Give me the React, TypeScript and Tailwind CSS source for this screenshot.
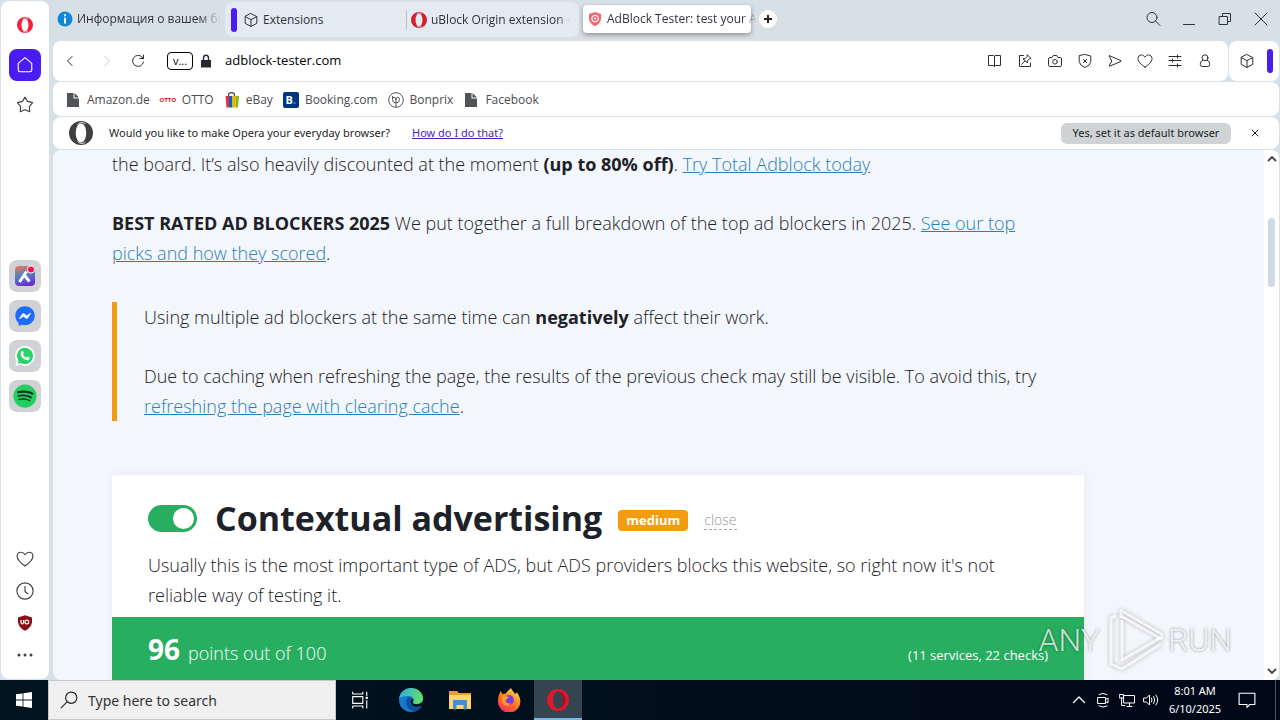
import React from "react";
import { FaFacebookMessenger, FaSpotify } from "react-icons/fa";

type IconProps = {
  children: React.ReactNode;
  className?: string;
  box?: string;
};

// line icon on a 16px grid
function Icon({ children, className = "size-4", box = "0 0 16 16" }: IconProps) {
  return (
    <svg
      viewBox={box}
      className={`shrink-0 ${className}`}
      fill="none"
      stroke="currentColor"
      strokeWidth="1"
      strokeLinecap="round"
      strokeLinejoin="round"
      aria-hidden="true"
    >
      {children}
    </svg>
  );
}

const cube = (
  <>
    <path d="M8 1.6 13.8 4.6V11.4L8 14.4 2.2 11.4V4.6Z" />
    <path d="M2.2 4.6 8 7.6 13.8 4.6M8 7.6V14.4" />
  </>
);

const heart = (
  <path d="M8 14.200C4 11.500 1 8.800 1 5.600 1 3.400 2.500 2 4.400 2 6 2 7.300 3 8 4.200 8.700 3 10 2 11.600 2 13.500 2 15 3.400 15 5.600 15 8.800 12 11.500 8 14.200Z" />
);

function OperaLogo({ className, color }: { className: string; color: string }) {
  return (
    <svg viewBox="0 0 24 24" className={`shrink-0 ${className}`} aria-hidden="true">
      <path
        fill={color}
        fillRule="evenodd"
        d="M12 0a12 12 0 1 0 0 24a12 12 0 1 0 0-24ZM12 2.600c3 0 5.200 4 5.200 9.400s-2.200 9.400-5.200 9.400s-5.200-4-5.200-9.400s2.200-9.400 5.200-9.400Z"
      />
      <path stroke="#fff" strokeWidth=".9" fill="none" d="M8.500 3.700C11 .8 14 .9 16.500 3M8.500 20.300C11 23.200 14 23.100 16.500 21" />
    </svg>
  );
}

const toolbarIcons = [
  {
    label: "Reader mode",
    icon: <path d="M7.500 3.500V13.500M7.500 3.500 6.500 2.500H1.500V12.500H6.500L7.500 13.500 8.500 12.500H13.500V2.500H8.500Z" />,
  },
  {
    label: "Easy setup",
    icon: (
      <>
        <path d="M6.500 2.500H2.500V13.500H13.500V10" />
        <path d="m10.500 2 3.500 3.500-1.500.3-2.200 2.200.1 2-4.400-4.400 2 .1 2.200-2.200ZM8 8l-3.300 3.300" />
      </>
    ),
  },
  {
    label: "Snapshot",
    icon: (
      <>
        <path d="M1.500 5.900q0-1.400 1.400-1.400H5L6.300 2.500H9.700L11 4.500h2.100q1.400 0 1.400 1.400v6.200q0 1.400-1.400 1.400H2.900q-1.400 0-1.400-1.400Z" />
        <circle cx="8" cy="8.800" r="2.300" />
      </>
    ),
  },
  {
    label: "Ad blocker",
    icon: (
      <>
        <path d="M8 1.500 13.800 3V8.500Q13.400 12.500 8 14.500 2.600 12.500 2.200 8.500V3Z" />
        <path d="m6.300 6.300 3.400 3.400M9.700 6.300 6.300 9.700" />
      </>
    ),
  },
  {
    label: "Flow",
    icon: <path d="M2.600 2.800 14 7.600q.5.400 0 .8L2.600 13.200q-.7.200-.4-.6L4.800 8 2.200 3.400q-.3-.800.4-.6Z" />,
  },
  { label: "Pinboards", icon: heart },
  {
    label: "Tab settings",
    icon: <path d="M2 3.500H14M2 7.500H14M2 12.500H14M10.500 2V5M5.500 6V9M10.500 11V14" />,
  },
  {
    label: "Profile",
    icon: (
      <>
        <circle cx="8" cy="4.800" r="3" />
        <path d="M5.700 7.200C3.800 8 3.300 9.800 3.300 11.500q0 2 2 2h5.400q2 0 2-2C12.700 9.800 12.200 8 10.300 7.200" />
      </>
    ),
  },
];

function PageIcon() {
  return (
    <svg viewBox="0 0 16 16" className="size-4" aria-hidden="true">
      <path fill="#505357" d="M2 1H8.500V6.500H14V15H2ZM9.500 1 14 5.500H9.500Z" />
    </svg>
  );
}

const bookmarks = [
  { name: "Amazon.de", icon: <PageIcon /> },
  {
    name: "OTTO",
    icon: (
      <span className="flex h-4 w-4 items-center justify-center font-['Liberation_Sans'] text-[6px] font-bold text-[#e2001a]">
        OTTO
      </span>
    ),
  },
  {
    name: "eBay",
    icon: (
      <svg viewBox="0 0 16 16" className="size-4" aria-hidden="true">
        <path d="M4.500 5V3Q4.500.7 7.500.7T10.500 3V5" fill="none" stroke="#444" strokeWidth="1.200" />
        <path fill="#e53238" d="M1.500 4H5V15.500H2.500Z" />
        <path fill="#0064d2" d="M5 4H8.500V15.500H5Z" />
        <path fill="#f5af02" d="M8 4H11.500V15.500H8Z" />
        <path fill="#86b817" d="M11.500 4H15L14 15.500H11.500Z" />
      </svg>
    ),
  },
  {
    name: "Booking.com",
    icon: (
      <span className="flex size-4 items-center justify-center rounded-xs bg-[#003580] text-[11px] font-bold text-white">
        B<span className="text-[#19b5fe]">.</span>
      </span>
    ),
  },
  {
    name: "Bonprix",
    icon: (
      <svg viewBox="0 0 16 16" className="size-4" fill="none" stroke="#555" aria-hidden="true">
        <circle cx="8" cy="8" r="7.300" />
        <path d="M8 15V8M4.500 4V7.500Q4.500 11 8 11 11.500 11 11.500 7.500 11.500 5.200 9.700 5.200 8 5.200 8 8M4.500 5.200Q8 4.800 8 8" />
      </svg>
    ),
  },
  { name: "Facebook", icon: <PageIcon /> },
];

function TabStrip() {
  return (
    <div className="flex h-[41px] items-start text-[12px] text-[#30343a]">
      <button className="flex h-[38px] w-[172px] items-center gap-1 pr-2 pl-1">
        <svg viewBox="0 0 16 16" className="size-4 shrink-0" aria-hidden="true">
          <circle cx="8" cy="8" r="7.500" fill="#1287d8" />
          <path stroke="#fff" strokeWidth="2" d="M8 3.200V5.200M8 6.700V12.500" />
        </svg>
        <span className="flex-1 text-left whitespace-nowrap [mask-image:linear-gradient(90deg,#000_82%,transparent_97%)]">
          Информация о вашем бр
        </span>
      </button>
      <div className="mt-0.5 flex h-[35px] w-[354px] items-center rounded-lg bg-[#e4eaf1] pl-1.5">
        <div className="h-6 w-1.5 rounded-full bg-[#4a1cf2]" />
        <button className="flex w-[169px] items-center gap-1 pl-1.5">
          <Icon>{cube}</Icon>
          <span>Extensions</span>
        </button>
        <div className="h-5 w-px bg-[#b9c1ca]" />
        <button className="flex w-[164px] items-center gap-1 pl-1">
          <OperaLogo className="size-4" color="#d3202c" />
          <span className="flex-1 text-left whitespace-nowrap [mask-image:linear-gradient(90deg,#000_90%,transparent)]">
            uBlock Origin extension -
          </span>
        </button>
      </div>
      <button className="mt-[5px] ml-1 flex h-7 w-[168px] items-center gap-1 rounded bg-white px-1 shadow-[0_2px_5px_#0005]">
        <svg viewBox="0 0 16 16" className="size-4 shrink-0" aria-hidden="true">
          <path fill="#f4646e" d="M8 1 14 3V8Q13.500 12.500 8 15.200 2.500 12.500 2 8V3Z" />
          <circle cx="8" cy="7.600" r="3.200" fill="none" stroke="#fff" strokeWidth="1.200" />
          <circle cx="8" cy="7.600" r="1" fill="#fff" />
        </svg>
        <span className="flex-1 text-left whitespace-nowrap [mask-image:linear-gradient(90deg,#000_90%,transparent)]">
          AdBlock Tester: test your A
        </span>
      </button>
      <button aria-label="New tab" className="mt-2.5 ml-2 flex size-[18px] items-center justify-center rounded-full bg-white">
        <svg viewBox="0 0 8 8" className="size-2" aria-hidden="true">
          <path stroke="#222" strokeWidth="2" d="M4 0V8M0 4H8" />
        </svg>
      </button>
      <div className="mt-[11px] ml-auto flex items-center gap-5 pr-2.5">
        <button aria-label="Search tabs">
          <Icon>
            <circle cx="7" cy="6.500" r="5" />
            <path d="m10.700 10.200 4.300 4.300" />
          </Icon>
        </button>
        <button aria-label="Minimize">
          <Icon><path d="M2.500 13.500H13.500" /></Icon>
        </button>
        <button aria-label="Restore">
          <Icon><path d="M2.500 5.500H10.500V13.500H2.500ZM5.500 5.500V2.500H13.500V10.500H10.500" /></Icon>
        </button>
        <button aria-label="Close window">
          <Icon><path d="M2 2 14 14M14 2 2 14" /></Icon>
        </button>
      </div>
    </div>
  );
}

function AddressBar() {
  return (
    <div className="flex gap-px text-[#2b2f35]">
      <div className="flex h-10 flex-1 items-center rounded-lg bg-white pr-[15px] pl-[9px]">
        <button aria-label="Back">
          <Icon><path d="M10 3.500 5.500 8 10 12.500" /></Icon>
        </button>
        <button aria-label="Forward" className="ml-[21px] text-[#c4c8cc]">
          <Icon><path d="M6 3.500 10.500 8 6 12.500" /></Icon>
        </button>
        <button aria-label="Reload" className="ml-[15px]">
          <Icon><path d="M13.500 9A5.500 5.500 0 1 1 12 4L13.500 5.500M13.500 2V5.500H10" /></Icon>
        </button>
        <button className="ml-[21px] flex h-[18px] w-[26px] items-center justify-center rounded border border-black text-[11px] text-black">
          v...
        </button>
        <svg viewBox="0 0 12 14" className="ml-[7px] h-3.5 w-3" aria-hidden="true">
          <path fill="#25292f" d="M1 6H11V13.500H1Z" />
          <path d="M3.500 6V4Q3.500 1.200 6 1.200T8.500 4V6" fill="none" stroke="#25292f" strokeWidth="1.400" />
        </svg>
        <input
          aria-label="Address"
          defaultValue="adblock-tester.com"
          className="ml-[13px] min-w-0 flex-1 bg-transparent text-[13px] text-black outline-none"
        />
        <div className="flex gap-3.5">
          {toolbarIcons.map((item) => (
            <button key={item.label} aria-label={item.label}>
              <Icon>{item.icon}</Icon>
            </button>
          ))}
        </div>
      </div>
      <div className="flex h-10 w-[50px] items-center justify-between rounded-lg bg-white pr-1.5 pl-2.5">
        <button aria-label="Extensions">
          <Icon>{cube}</Icon>
        </button>
        <div className="h-6 w-1.5 rounded-full bg-[#4a1cf2]" />
      </div>
    </div>
  );
}

function BookmarksBar() {
  return (
    <nav className="flex h-[34px] items-center gap-2.5 rounded-lg bg-white pt-0.5 pl-3 text-[12px] text-[#4a4d52]">
      {bookmarks.map((item) => (
        <a key={item.name} href="#" className="flex items-center gap-1.5">
          {item.icon}
          {item.name}
        </a>
      ))}
    </nav>
  );
}

function DefaultPrompt() {
  return (
    <div className="flex h-8 items-center rounded-lg bg-white pr-4 pl-4 font-['Noto_Sans'] text-[11px] text-[#1d1f22]">
      <OperaLogo className="size-6" color="#3d3f42" />
      <span className="ml-4">Would you like to make Opera your everyday browser?</span>
      <a href="#" className="ml-[22px] text-[#4a1cc4] underline">
        How do I do that?
      </a>
      <button className="ml-auto h-[21px] w-[170px] rounded-md bg-[#cfd3d6]">
        Yes, set it as default browser
      </button>
      <button aria-label="Dismiss" className="ml-4">
        <Icon><path d="m5 5 6 6M11 5 5 11" /></Icon>
      </button>
    </div>
  );
}

function SideBar() {
  const slot = "flex size-8 items-center justify-center rounded-lg";
  return (
    <aside className="my-px ml-px flex w-12 shrink-0 flex-col items-center rounded-lg bg-white py-2 text-[#3d4147]">
      <div className="flex flex-col gap-2">
        <button aria-label="Opera menu" className={slot}>
          <OperaLogo className="size-4" color="#f5203a" />
        </button>
        <button aria-label="Home" className={`${slot} bg-[#4a1cf2] text-white`}>
          <Icon className="size-[18px]">
            <path d="M8 1.500 14 6.500V12.500Q14 14 12.500 14H3.500Q2 14 2 12.500V6.500Z" />
          </Icon>
        </button>
        <button aria-label="Speed dial" className={slot}>
          <Icon className="size-[18px]">
            <path d="M8 1 10.200 4.800 14.700 5.900 11.900 9.400 12.200 14 8 12.300 3.800 14 4.100 9.400 1.300 5.900 5.800 4.800Z" />
          </Icon>
        </button>
      </div>
      <div className="flex flex-1 flex-col justify-center gap-2 pt-2">
        <button aria-label="Aria" className={`${slot} bg-[#d0d2d5]`}>
          <svg viewBox="0 0 22 22" className="size-[22px]" aria-hidden="true">
            <defs>
              <linearGradient id="aria" x1=".2" y1="0" x2=".5" y2="1">
                <stop offset="0" stopColor="#f0745c" />
                <stop offset=".45" stopColor="#4f86bd" />
                <stop offset="1" stopColor="#6a2fd0" />
              </linearGradient>
            </defs>
            <rect x="1" y="1" width="20" height="20" rx="4" fill="url(#aria)" />
            <path d="m5.500 17 7-10.500M10.500 10.500 15.500 16.500" stroke="#fff" strokeWidth="3" />
            <circle cx="17" cy="4.500" r="3.600" fill="#f5104e" stroke="#fff" />
          </svg>
        </button>
        <button aria-label="Messenger" className={`${slot} bg-[#d0d2d5]`}>
          <FaFacebookMessenger className="size-5 text-[#1c6cff] [background:radial-gradient(circle,#fff_45%,transparent_46%)]" />
        </button>
        <button aria-label="WhatsApp" className={`${slot} bg-[#d0d2d5]`}>
          <svg viewBox="0 0 20 20" className="size-5" aria-hidden="true">
            <path fill="#fff" d="M10 0a9.900 9.900 0 1 1-4.600 18.700L.3 20 1.600 15A9.900 9.900 0 0 1 10 0Z" />
            <path fill="#25d366" d="M10 1.800a8.100 8.100 0 1 1-4.200 15.100L2.700 17.700 3.600 14.700A8.100 8.100 0 0 1 10 1.800Z" />
            <path
              fill="#fff"
              d="M6.800 5.300c.6-.6 1.100-.4 1.400.3l.6 1.500c.1.400-.6 1-.7 1.300.6 1.400 1.800 2.500 3.200 3.100.4-.1.900-1.100 1.300-.9l1.700.8c.5.300.4.8.1 1.500-.5 1-1.800 1.400-2.900 1.200-3-.6-5.400-3.100-5.800-5.800-.1-1.200.4-2.300 1.100-3Z"
            />
          </svg>
        </button>
        <button aria-label="Spotify" className={`${slot} bg-[#d0d2d5]`}>
          <FaSpotify className="size-6 text-[#22cf60] [background:radial-gradient(circle,#15301e_58%,transparent_59%)]" />
        </button>
      </div>
      <div className="flex flex-col">
        <button aria-label="Pinboards" className={slot}>
          <Icon className="size-[18px]">{heart}</Icon>
        </button>
        <button aria-label="History" className={slot}>
          <Icon className="size-[18px]">
            <circle cx="8" cy="8" r="7.200" />
            <path d="M8 3.800V8.500L10.500 10.500" />
          </Icon>
        </button>
        <button aria-label="uBlock Origin" className={slot}>
          <svg viewBox="0 0 16 16" className="size-4" aria-hidden="true">
            <path fill="#8c0f16" d="M8 .3 15 2.500V7.500Q14 13 8 15.800 2 13 1 7.500V2.500Z" />
            <path d="M4 5V7.500Q4 9 5.200 9T6.500 7.500V5" fill="none" stroke="#fff" strokeWidth="1.200" />
            <circle cx="9.800" cy="7" r="1.900" fill="none" stroke="#fff" strokeWidth="1.200" />
          </svg>
        </button>
        <button aria-label="More" className={slot}>
          <Icon>
            <path strokeWidth="3" d="M2 8h.01M8 8h.01M14 8h.01" />
          </Icon>
        </button>
      </div>
    </aside>
  );
}

function ContentPage() {
  const link = "text-[#2980b9] underline";
  return (
    <div className="mt-px flex min-h-0 flex-1 overflow-hidden rounded-lg bg-[#f3f6fa]">
      <main className="-mt-px min-w-0 flex-1 pl-[59px] text-[18px] leading-[30px] font-light text-[#1d2128]">
        <p className="max-w-[930px]">
          the board. It’s also heavily discounted at the moment{" "}
          <b className="font-bold">(up to 80% off)</b>.{" "}
          <a href="#" className={link}>Try Total Adblock today</a>
        </p>
        <p className="mt-[29px] max-w-[930px]">
          <b className="font-bold">BEST RATED AD BLOCKERS 2025</b> We put together a full
          breakdown of the top ad blockers in 2025.{" "}
          <a href="#" className={link}>See our top picks and how they scored</a>.
        </p>
        <blockquote className="mt-[34px] max-w-[930px] border-l-[5px] border-[#f39c12] pl-[27px]">
          <p>
            Using multiple ad blockers at the same time can{" "}
            <b className="font-bold">negatively</b> affect their work.
          </p>
          <p className="mt-[29px]">
            Due to caching when refreshing the page, the results of the previous check may still
            be visible. To avoid this, try{" "}
            <a href="#" className={link}>refreshing the page with clearing cache</a>.
          </p>
        </blockquote>
        <section className="mt-[54px] max-w-[972px] bg-white shadow-[0_0_10px_#0000000d]">
          <div className="px-9 pt-[19px] pb-[7px]">
            <div className="flex items-center">
              <input
                type="checkbox"
                defaultChecked
                aria-label="Contextual advertising"
                className="relative h-[27px] w-[49px] appearance-none rounded-full bg-[#27ae60] before:absolute before:top-[3px] before:right-[3px] before:size-[21px] before:rounded-full before:bg-white"
              />
              <h2 className="ml-[18px] text-[34px] leading-[48px] font-bold">Contextual advertising</h2>
              <span className="mt-1 ml-4 rounded bg-[#f39c12] px-2 text-[13px] leading-[21px] font-bold text-white">
                medium
              </span>
              <button className="mt-1 ml-4 border-b border-dashed border-[#aaa] text-[14px] leading-[18px] font-light text-[#999]">
                close
              </button>
            </div>
            <p className="mt-2">
              Usually this is the most important type of ADS, but ADS providers blocks this
              website, so right now it's not reliable way of testing it.
            </p>
          </div>
          <div className="flex h-20 items-baseline justify-between bg-[#27ae60] px-9 pt-[17px] text-white">
            <div>
              <b className="mr-2 text-[28px] font-bold">96</b>points out of 100
            </div>
            <span className="text-[13px] font-normal">(11 services, 22 checks)</span>
          </div>
        </section>
      </main>
      <div className="flex w-[15px] flex-col items-center justify-between bg-white py-1 text-[#505050]">
        <Icon className="size-2.5" box="0 0 10 10"><path strokeWidth="2" d="M1.500 6.500 5 3 8.500 6.500" /></Icon>
        <div className="mt-[54px] mb-auto h-[69px] w-[7px] rounded-full bg-[#cfdae4]" />
        <Icon className="size-2.5" box="0 0 10 10"><path strokeWidth="2" d="M1.500 3.500 5 7 8.500 3.500" /></Icon>
      </div>
    </div>
  );
}

// translucent brand mark laid over the lower right corner
function Watermark() {
  return (
    <div className="pointer-events-none absolute right-12 bottom-12 flex items-center font-['Roboto'] text-[32px] leading-[60px] font-light text-white/75 [text-shadow:0_0_3px_#0006]">
      <span>ANY</span>
      <svg viewBox="0 0 60 64" className="ml-2 h-16 w-[60px] drop-shadow-[0_0_2px_#0005]" fill="none" aria-hidden="true">
        <g stroke="#fff" strokeOpacity=".75" strokeWidth="3" strokeLinejoin="round">
          <path d="M13 10V2.500L54 26.500V30L48 31" />
          <path d="M14 12V52L52 30 13 8" />
          <path d="M8 8 3 10V56L14 61 53 36" />
        </g>
      </svg>
      <span>RUN</span>
    </div>
  );
}

function TaskBar() {
  const item = "flex h-10 w-12 items-center justify-center";
  return (
    <footer className="flex h-10 shrink-0 bg-gradient-to-r from-[#02141f] to-[#010818] font-['Noto_Sans'] text-white">
      <button aria-label="Start" className={item}>
        <svg viewBox="0 0 16 16" className="size-4" fill="#fff" aria-hidden="true">
          <path d="M0 2.300 6.600 1.400V7.600H0ZM7.400 1.300 16 0V7.600H7.400ZM0 8.400H6.600V14.600L0 13.700ZM7.400 8.400H16V16L7.400 14.700Z" />
        </svg>
      </button>
      <label className="flex w-[288px] items-center gap-2.5 border border-[#c8c8c8] bg-[#f0f0f0] pl-[11px] text-[#222]">
        <Icon className="size-[18px]">
          <circle cx="10" cy="6" r="5" />
          <path d="M6.300 9.700 1 15" />
        </Icon>
        <input
          placeholder="Type here to search"
          className="min-w-0 flex-1 bg-transparent text-[14px] outline-none placeholder:text-[#333]"
        />
      </label>
      <button aria-label="Task view" className={item}>
        <Icon className="size-[18px]">
          <path d="M1.500 5H10.500V11H1.500ZM1.500 1V2.700H10.500V1M1.500 15V13.300H10.500V15M14 1V4M14 8.500V15" />
          <path fill="currentColor" d="M13.500 5.500h1v1h-1Z" />
        </Icon>
      </button>
      <div className="ml-[3px] flex gap-px">
        <button aria-label="Edge" className={item}>
          <svg viewBox="0 0 24 24" className="size-6" aria-hidden="true">
            <defs>
              <linearGradient id="edgeTop" x1="0" y1="0" x2="1" y2=".3">
                <stop offset="0" stopColor="#2aa8e8" />
                <stop offset="1" stopColor="#5fe06a" />
              </linearGradient>
            </defs>
            <circle cx="12" cy="12" r="12" fill="#1579cf" />
            <path fill="url(#edgeTop)" d="M0 11C1 4 6 0 12 0c7 0 12 5 12 10 0 4-3 6-6.500 6-2.500 0-4-1-3.500-2 1.500-2 .5-6-4-6C5 8 1 9 0 11Z" />
            <path fill="#0c4fa0" d="M9 9.500C5 14 8 22 15 23.600 19 23 22 20 23 17.500c-5 3-12 1.500-12-4 0-1.500.7-2.500 1.500-3.200Q11 9 9 9.500Z" />
            <path fill="#02141f" d="M13.800 10.500c1 1.500.8 2.700-.1 3.800-.4 1.200 1.500 2.200 4 2 3-.1 5-1.300 6.100-3.300.2 1.800-.1 3.300-.8 4.500-5 2.800-11.500 1-11.500-4 0-1.300.9-2.500 2.300-3Z" />
          </svg>
        </button>
        <button aria-label="File Explorer" className={item}>
          <svg viewBox="0 0 24 24" className="size-6" aria-hidden="true">
            <path fill="#e8a120" d="M1 3H9L11 5H23V10H1Z" />
            <path fill="#ffd766" d="M1 7H23V21H1Z" />
            <path fill="#3f92d2" d="M5 12H19V21.500H15.500V17H8.500V21.500H5Z" />
          </svg>
        </button>
        <button aria-label="Firefox" className={item}>
          <svg viewBox="0 0 24 24" className="size-6" aria-hidden="true">
            <defs>
              <linearGradient id="fox" x1=".8" y1="0" x2=".2" y2="1">
                <stop offset="0" stopColor="#ffe14a" />
                <stop offset=".5" stopColor="#ff7a1c" />
                <stop offset="1" stopColor="#f0246a" />
              </linearGradient>
            </defs>
            <path fill="url(#fox)" d="M3.500 3 5.500 6 9 5.500C10 3 12 2.500 14 0c1 3 3 3.500 4 6l2-1.500c2 3 3.500 6 3.300 9A11.200 11.200 0 1 1 1 12C1 8 2.500 6.500 3.500 3Z" />
            <circle cx="12" cy="12" r="5" fill="#7a3fe0" />
            <path fill="#ff9a20" d="M5.500 8C8 7 9.500 8 12 9.500 11 11 9 10.500 8.500 12.500 9 15 11.500 16 14 15c-1.500 3-6 3.500-8 1S4.500 10.500 5.500 8Z" />
          </svg>
        </button>
        <button aria-label="Opera" className={`${item} border-b-2 border-[#76b9ed] bg-[#35444f] pt-0.5`}>
          <svg viewBox="0 0 24 24" className="size-6" aria-hidden="true">
            <path
              fill="#e0182c"
              fillRule="evenodd"
              d="M12 1a11 11 0 1 0 0 22a11 11 0 1 0 0-22ZM12 3.500c3 0 5 3.800 5 8.500s-2 8.500-5 8.500-5-3.800-5-8.500 2-8.500 5-8.500Z"
            />
            <path fill="#a01020" d="M13 3.500c4 0 6.500 4 6.500 8.500s-2.500 8.500-6.500 8.500c2.500-1 4-4.500 4-8.500s-1.500-7.500-4-8.500Z" />
          </svg>
        </button>
      </div>
      <div className="ml-auto flex items-center gap-2">
        <button aria-label="Show hidden icons">
          <Icon><path strokeWidth="1.400" d="M2.500 10.500 8 5 13.500 10.500" /></Icon>
        </button>
        <Icon>
          <path d="M3 5.500H10.500V11.500H3ZM10.500 7.500 13 6V11L10.500 9.500M4 2.500Q8 .2 12 2.500M4 14Q8 16.300 12 14" />
        </Icon>
        <Icon>
          <path d="M5 3.500H15.500V11H5ZM8 14.500H13M10.500 11V14.500M.7 2.500H4.500V6H.7ZM2.600 6V13.500H6" />
        </Icon>
        <Icon>
          <path d="M1 6H3.500L6.500 3V13L3.500 10H1ZM8.500 6Q9.700 8 8.500 10M10.700 4.500Q13 8 10.700 11.500M13 3Q16.500 8 13 13" />
        </Icon>
        <div className="w-[56px] text-center text-[11px] leading-[18px]">
          <div>8:01 AM</div>
          <div>6/10/2025</div>
        </div>
        <button aria-label="Notifications" className="ml-[7px]">
          <Icon className="size-[18px]"><path d="M1 2H15V12H10.500L8 14.500V12H1Z" /></Icon>
        </button>
        <div className="mr-1 ml-[11px] h-10 w-px bg-[#4b5560]" />
      </div>
    </footer>
  );
}

export default function App() {
  return (
    <div className="relative flex h-screen flex-col overflow-hidden bg-[#d7dfe7] font-['Open_Sans','Noto_Sans',sans-serif]">
      <div className="flex min-h-0 flex-1 gap-1">
        <SideBar />
        <div className="flex min-w-0 flex-1 flex-col pr-px">
          <TabStrip />
          <div className="flex flex-col gap-px">
            <AddressBar />
            <BookmarksBar />
            <DefaultPrompt />
          </div>
          <ContentPage />
        </div>
      </div>
      <TaskBar />
      <Watermark />
    </div>
  );
}
